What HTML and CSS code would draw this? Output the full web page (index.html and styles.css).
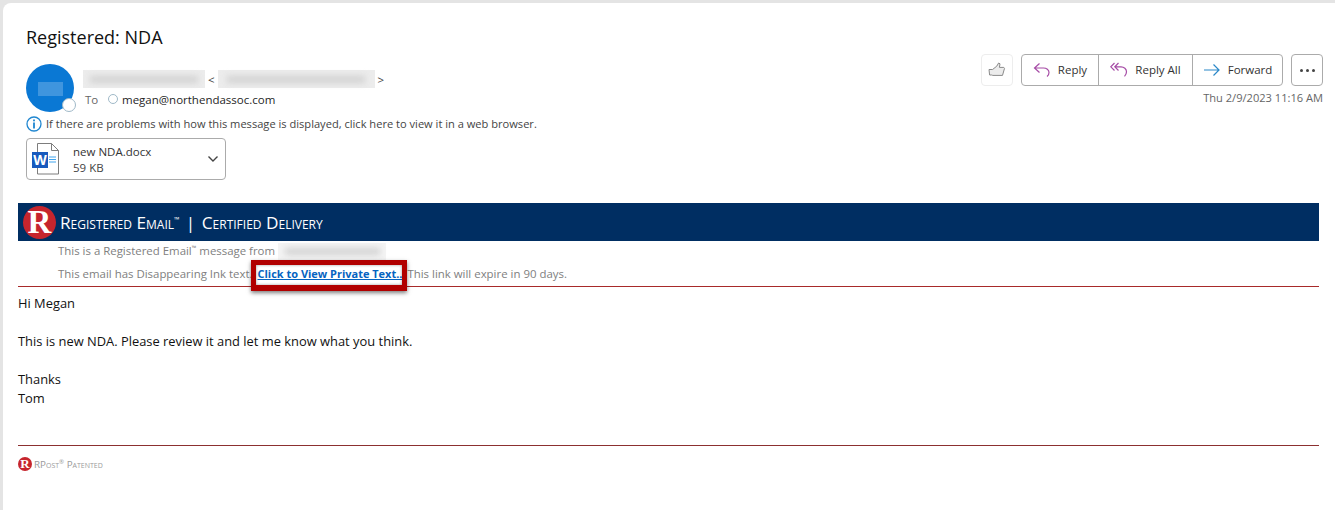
FILE: index.html
```html
<!DOCTYPE html>
<html lang="en">
<head>
    <meta charset="UTF-8">
    <title>Registered: NDA</title>
    <link rel="stylesheet" href="styles.css">
</head>
<body>
    <div class="reading-pane">
        <h1 class="subject">Registered: NDA</h1>

        <div class="message-head">
            <div class="avatar">
                <div class="avatar-blur"></div>
                <div class="presence"></div>
            </div>
            <div class="head-text">
                <div class="sender">
                    <div class="blur-box name-blur"><div class="blur-ink"></div></div>
                    <span class="angle">&lt;</span>
                    <div class="blur-box mail-blur"><div class="blur-ink"></div></div>
                    <span class="angle">&gt;</span>
                </div>
                <div class="recipient">
                    <span class="to-label">To</span>
                    <span class="small-presence"></span>
                    <span>megan@northendassoc.com</span>
                </div>
            </div>
            <div class="head-actions">
                <div class="action-row">
                    <button class="like-button">
                        <svg width="18" height="18" viewBox="0 0 18 18" fill="#ececec" stroke="#8a8a8a" stroke-width="1">
                            <path d="M1 8.500h3.600l4.200-3.400L10.600 2l1.400.8-.6 3.600h4.400l.7 1-2 7H4.800L3.600 14H1.600z"/>
                        </svg>
                    </button>
                    <div class="reply-group">
                        <button class="reply-button">
                            <svg width="18" height="16" viewBox="0 0 18 16" fill="none" stroke="#a64ca6" stroke-width="1.2">
                                <path d="M6.500 1.500 1.500 6l5 4.500M1.500 6h9c3 0 5.500 2 5.500 4.500 0 1.500-.7 3-2 4"/>
                            </svg>
                            Reply
                        </button>
                        <button class="reply-button">
                            <svg width="18" height="16" viewBox="0 0 18 16" fill="none" stroke="#a64ca6" stroke-width="1.2">
                                <path d="M4.500 1 .8 4.800l3.700 3.700M8.500 1 4.800 4.800l3.700 3.700M4.800 4.800h6.200c3 0 5.500 2.200 5.500 5 0 1.800-.7 3.200-2 4.500"/>
                            </svg>
                            Reply All
                        </button>
                        <button class="reply-button">
                            <svg width="18" height="16" viewBox="0 0 18 16" fill="none" stroke="#2b88c8" stroke-width="1.2">
                                <path d="M1 8h15M10.500 2.500 16 8l-5.500 5.500"/>
                            </svg>
                            Forward
                        </button>
                    </div>
                    <button class="more-button">
                        <span class="more-dot"></span><span class="more-dot"></span><span class="more-dot"></span>
                    </button>
                </div>
                <div class="sent-date">Thu 2/9/2023 11:16 AM</div>
            </div>
        </div>

        <div class="info-bar">
            <svg width="16" height="16" viewBox="0 0 16 16" fill="none">
                <circle cx="8" cy="8" r="7" stroke="#1f86d0" stroke-width="1.300"/>
                <rect x="7.100" y="3.500" width="1.800" height="1.800" fill="#1f86d0"/>
                <rect x="7.100" y="6.500" width="1.800" height="6" fill="#1f86d0"/>
            </svg>
            <span class="info-text">If there are problems with how this message is displayed, click here to view it in a web browser.</span>
        </div>

        <div class="attachment">
            <svg class="word-icon" width="30" height="32" viewBox="0 0 30 32">
                <path d="M5.500.5h14l7 7v23.500h-21z" fill="#fff" stroke="#7d7d7d"/>
                <path d="M19.500.5v7h7" fill="none" stroke="#7d7d7d"/>
                <rect x="0" y="9" width="16" height="16" fill="#185abd"/>
                <text x="8" y="22" class="word-letter">W</text>
                <path d="M17 14h7M17 16.500h7M17 19h7" stroke="#41a5ee" stroke-width="1"/>
            </svg>
            <div class="attachment-text">
                <div class="attachment-name">new NDA.docx</div>
                <div class="attachment-size">59 KB</div>
            </div>
            <svg class="chevron" width="12" height="8" viewBox="0 0 12 8" fill="none" stroke="#444" stroke-width="1.400">
                <path d="M1.500 1.500 6 6l4.500-4.500"/>
            </svg>
        </div>

        <div class="message-body">
            <div class="rpost-banner">
                <div class="rpost-logo">R</div>
                <div class="rpost-title">Registered Email<sup>™</sup> <span class="title-bar">|</span> Certified Delivery</div>
            </div>
            <div class="rpost-notes">
                <div class="note-line">This is a Registered Email<sup>™</sup> message from <span class="blur-box from-blur"><span class="blur-ink"></span></span></div>
                <div class="note-line">This email has Disappearing Ink text. <span class="highlight-wrap"><a class="private-link" href="#">Click to View Private Text..</a><span class="highlight-box"></span></span> This link will expire in 90 days.</div>
            </div>
            <div class="red-rule"></div>

            <div class="body-text">
                <p>Hi Megan</p>
                <p>This is new NDA. Please review it and let me know what you think.</p>
                <p>Thanks<br>Tom</p>
            </div>

            <div class="red-rule footer-rule"></div>
            <div class="patent-line">
                <div class="rpost-logo small-logo">R</div>
                <span class="patent-text">RPost<sup>®</sup> Patented</span>
            </div>
        </div>
    </div>
</body>
</html>
```

FILE: styles.css
```css
/* Page and pane */
* {
    box-sizing: border-box;
}

body {
    margin: 0;
    height: 510px;
    overflow: hidden;
    background-color: #e4e4e4;
    font-family: "Open Sans", "Noto Sans", Arial, sans-serif;
    color: #262626;
}

.reading-pane {
    margin: 3px 0 0 3px;
    height: 507px;
    background-color: #fff;
    border-top-left-radius: 8px;
    padding: 22px 16px 0 15px;
}

.subject {
    margin: 0 0 0 8px;
    font-size: 18px;
    line-height: 25px;
    font-weight: 400;
    color: #111;
}

/* Sender and buttons */
.message-head {
    display: flex;
    margin: 14px -4px 0 8px;
    height: 48px;
}

.avatar {
    position: relative;
    width: 48px;
    height: 48px;
    border-radius: 50%;
    background-color: #0a78d4;
    flex-shrink: 0;
    display: flex;
    align-items: center;
    justify-content: center;
}

.avatar-blur {
    width: 25px;
    height: 14px;
    margin-top: 2px;
    background-color: #3f95de;
    filter: blur(0.5px);
}

.presence {
    position: absolute;
    right: -2px;
    bottom: 0;
    width: 14px;
    height: 14px;
    border-radius: 50%;
    background-color: #fff;
    border: 1px solid #9fb9c8;
}

.head-text {
    margin-left: 9px;
    font-size: 11.500px;
}

.sender {
    display: flex;
    align-items: center;
    height: 18px;
    margin-top: 6px;
}

.angle {
    color: #444;
    margin: 0 3px;
}

.blur-box {
    background-color: #ececec;
    display: flex;
    align-items: center;
    justify-content: center;
    height: 18px;
}

.blur-ink {
    width: 88%;
    height: 7px;
    background-color: #d2d2d2;
    filter: blur(3px);
}

.name-blur {
    width: 122px;
}

.mail-blur {
    width: 157px;
}

.recipient {
    display: flex;
    align-items: center;
    height: 20px;
    margin: 1px 0 0 2px;
}

.to-label {
    color: #666;
    width: 23px;
}

.small-presence {
    width: 10px;
    height: 10px;
    border-radius: 50%;
    border: 1px solid #9fb9c8;
    margin-right: 4px;
}

.head-actions {
    margin-left: auto;
    display: flex;
    flex-direction: column;
    align-items: flex-end;
    margin-top: -10px;
}

.action-row {
    display: flex;
}

button {
    font-family: inherit;
    background-color: #fff;
    color: #333;
    font-size: 11.500px;
    padding: 0;
    height: 32px;
    cursor: pointer;
}

.like-button {
    width: 32px;
    border: 1px solid #ededed;
    border-radius: 4px;
    margin-right: 8px;
    display: flex;
    align-items: center;
    justify-content: center;
}

.reply-group {
    display: flex;
    border: 1px solid #ababab;
    border-radius: 4px;
    height: 32px;
    margin-right: 8px;
}

.reply-button {
    border: none;
    height: 30px;
    padding-bottom: 2px;
    background: transparent;
    display: flex;
    align-items: center;
    justify-content: center;
    gap: 7px;
    width: 94px;
    border-left: 1px solid #ababab;
}

.reply-button svg {
    margin-top: 2px;
}

.reply-button:first-child {
    width: 76px;
    border-left: none;
}

.reply-button:last-child {
    width: 90px;
}

.more-button {
    width: 32px;
    border: 1px solid #ababab;
    border-radius: 4px;
    display: flex;
    align-items: center;
    justify-content: center;
    gap: 3px;
}

.more-dot {
    width: 3px;
    height: 3px;
    border-radius: 50%;
    background-color: #444;
}

.sent-date {
    font-size: 11.100px;
    color: #666;
    margin-top: 4px;
}

/* Info line and attachment */
.info-bar {
    display: flex;
    align-items: center;
    gap: 4px;
    margin: 4px 0 0 8px;
    height: 16px;
    font-size: 11.100px;
    color: #444;
}

.info-text {
    margin-bottom: 2px;
}

.attachment {
    display: flex;
    align-items: center;
    margin: 6px 0 0 8px;
    width: 200px;
    height: 42px;
    border: 1px solid #ababab;
    border-radius: 4px;
    padding: 0 6px 0 5px;
}

.word-letter {
    font-family: "Open Sans", Arial, sans-serif;
    font-size: 14px;
    font-weight: 700;
    fill: #fff;
    text-anchor: middle;
}

.attachment-text {
    margin-left: 11px;
    padding-top: 2px;
    font-size: 11.500px;
    line-height: 16px;
    color: #444;
}

.attachment-name {
    color: #333;
}

.chevron {
    margin-left: auto;
}

/* Message body */
.message-body {
    margin-top: 23px;
}

.rpost-banner {
    display: flex;
    align-items: center;
    height: 38px;
    background-color: #002e62;
    padding-left: 5px;
}

.rpost-logo {
    width: 33px;
    height: 33px;
    border-radius: 50%;
    background-color: #c6252d;
    color: #fff;
    font-family: "Liberation Serif", serif;
    font-weight: 700;
    font-size: 33px;
    line-height: 33px;
    text-align: center;
}

.rpost-title {
    margin-left: 4px;
    color: #fff;
    font-family: "Open Sans", Arial, sans-serif;
    font-variant: small-caps;
    font-size: 17.200px;
    white-space: nowrap;
}

.rpost-title sup {
    font-size: 7px;
    line-height: 0;
}

.title-bar {
    margin: 0 2px;
}

.rpost-notes {
    margin-top: -2px;
    padding-left: 40px;
    font-size: 11.430px;
    color: #808080;
}

.rpost-notes sup {
    font-size: 6px;
    line-height: 0;
}

.note-line {
    height: 23px;
    line-height: 23px;
    white-space: nowrap;
}

.from-blur {
    display: inline-flex;
    vertical-align: middle;
    width: 108px;
    background-color: #f4f4f4;
}

.from-blur .blur-ink {
    display: block;
}

.highlight-wrap {
    position: relative;
    margin: 0 2px;
}

.private-link {
    color: #0563c1;
    font-size: 10.970px;
    font-weight: 700;
    text-decoration: underline;
}

.highlight-box {
    position: absolute;
    left: -7px;
    right: -5px;
    top: -6px;
    bottom: -10px;
    border: 5px solid #b10000;
    border-bottom-width: 6px;
    box-shadow: 0 2px 4px rgba(0, 0, 0, 0.5), inset 0 0 3px rgba(0, 0, 0, 0.4);
}

.red-rule {
    height: 1px;
    margin-top: 1px;
    background-color: #a82a2a;
}

.body-text {
    font-size: 12.900px;
    line-height: 19px;
    color: #111;
    margin-top: 7px;
}

.body-text p {
    margin: 0 0 19px;
}

.footer-rule {
    margin-top: 37px;
    background-color: #8c3030;
}

/* Patent footer */
.patent-line {
    display: flex;
    align-items: center;
    margin-top: 11px;
    gap: 2px;
}

.small-logo {
    width: 14px;
    height: 14px;
    font-size: 13px;
    line-height: 14px;
}

.patent-text {
    font-family: "Open Sans", Arial, sans-serif;
    font-variant: small-caps;
    font-size: 9.800px;
    color: #9a9a9a;
}

.patent-text sup {
    font-size: 6px;
    line-height: 0;
}
```
